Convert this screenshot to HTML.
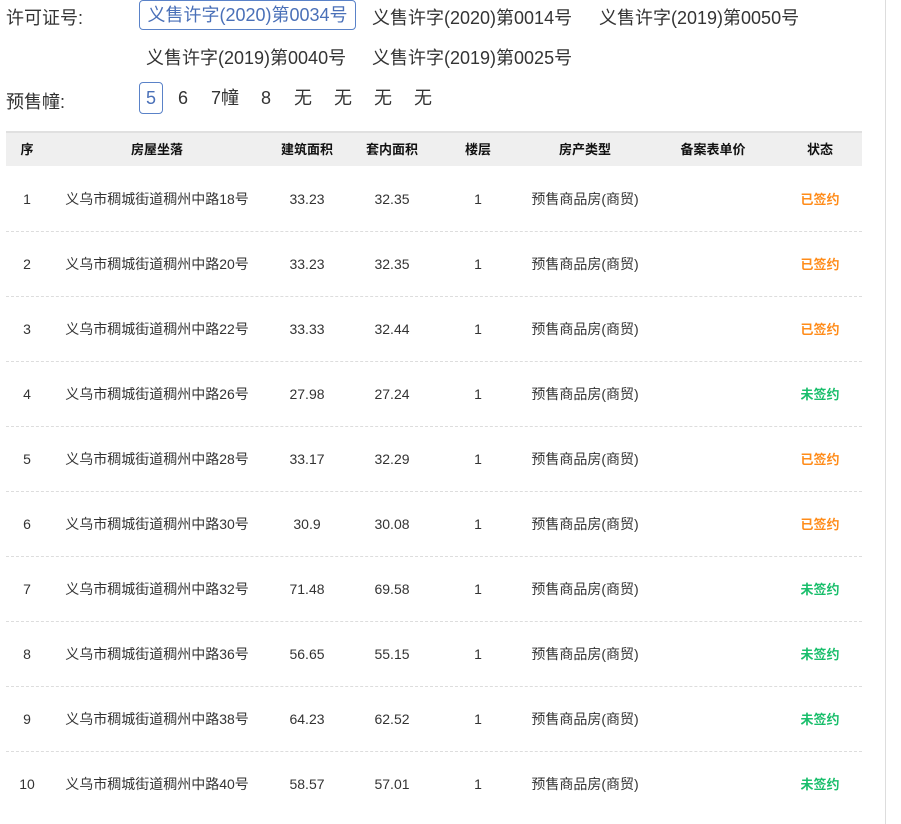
<!DOCTYPE html>
<html><head><meta charset="utf-8"><style>
body{margin:0;width:901px;height:824px;background:#fff;font-family:"Liberation Sans","Noto Sans CJK SC",sans-serif;color:#333;position:relative;overflow:hidden}
.a{position:absolute;white-space:nowrap}
.t{font-size:18px;color:#333}
.vl{position:absolute;left:885px;top:0;width:1px;height:824px;background:#ddd}
.hd{position:absolute;left:6px;top:131px;width:856px;height:35px;background:#efefef;border-top:2px solid #e0e0e0;box-sizing:border-box}
.c{position:absolute;transform:translateX(-50%);font-size:14px;line-height:20px;height:20px;white-space:nowrap}
.h{font-weight:bold;color:#111;font-size:13px}
.sep{position:absolute;left:6px;width:856px;border-top:1px dashed #ddd}
.o{color:#ff8c1a;font-weight:bold;font-size:13px}.g{color:#19be6b;font-weight:bold;font-size:13px}
.box{position:absolute;border:1px solid #5a82c8;border-radius:4px;color:#4a70b8}
</style></head><body>
<div class="vl"></div>
<div class="a t" style="left:6px;top:4px">许可证号:</div>
<div class="box t" style="left:139px;top:0;width:215px;height:28px;line-height:28px;text-align:center">义售许字(2020)第0034号</div>
<div class="a t" style="left:372px;top:4px">义售许字(2020)第0014号</div>
<div class="a t" style="left:599px;top:4px">义售许字(2019)第0050号</div>
<div class="a t" style="left:146px;top:44px">义售许字(2019)第0040号</div>
<div class="a t" style="left:372px;top:44px">义售许字(2019)第0025号</div>
<div class="a t" style="left:6px;top:88px">预售幢:</div>
<div class="box t" style="left:139px;top:82px;width:22px;height:30px;line-height:30px;text-align:center">5</div>
<div class="a t" style="left:178px;top:88px;line-height:20px">6</div>
<div class="a t" style="left:211px;top:88px;line-height:20px">7幢</div>
<div class="a t" style="left:261px;top:88px;line-height:20px">8</div>
<div class="a t" style="left:294px;top:88px;line-height:20px">无</div>
<div class="a t" style="left:334px;top:88px;line-height:20px">无</div>
<div class="a t" style="left:374px;top:88px;line-height:20px">无</div>
<div class="a t" style="left:414px;top:88px;line-height:20px">无</div>
<div class="hd"></div>
<div id="tb"></div>
<script>
var cx=[27,157,307,392,478,585,713,820];
var hs=["序","房屋坐落","建筑面积","套内面积","楼层","房产类型","备案表单价","状态"];
var d=[[18,"33.23","32.35",1],[20,"33.23","32.35",1],[22,"33.33","32.44",1],[26,"27.98","27.24",0],[28,"33.17","32.29",1],[30,"30.9","30.08",1],[32,"71.48","69.58",0],[36,"56.65","55.15",0],[38,"64.23","62.52",0],[40,"58.57","57.01",0]];
var h="";
hs.forEach(function(s,i){h+='<div class="c h" style="left:'+cx[i]+'px;top:140px">'+s+'</div>';});
d.forEach(function(r,k){var y=189+k*65;
var v=[k+1,"义乌市稠城街道稠州中路"+r[0]+"号",r[1],r[2],"1","预售商品房(商贸)","",r[3]?'<span class="o">已签约</span>':'<span class="g">未签约</span>'];
v.forEach(function(s,i){h+='<div class="c" style="left:'+cx[i]+'px;top:'+y+'px">'+s+'</div>';});
if(k<9)h+='<div class="sep" style="top:'+(231+k*65)+'px"></div>';});
document.getElementById("tb").innerHTML=h;
</script>
</body></html>
